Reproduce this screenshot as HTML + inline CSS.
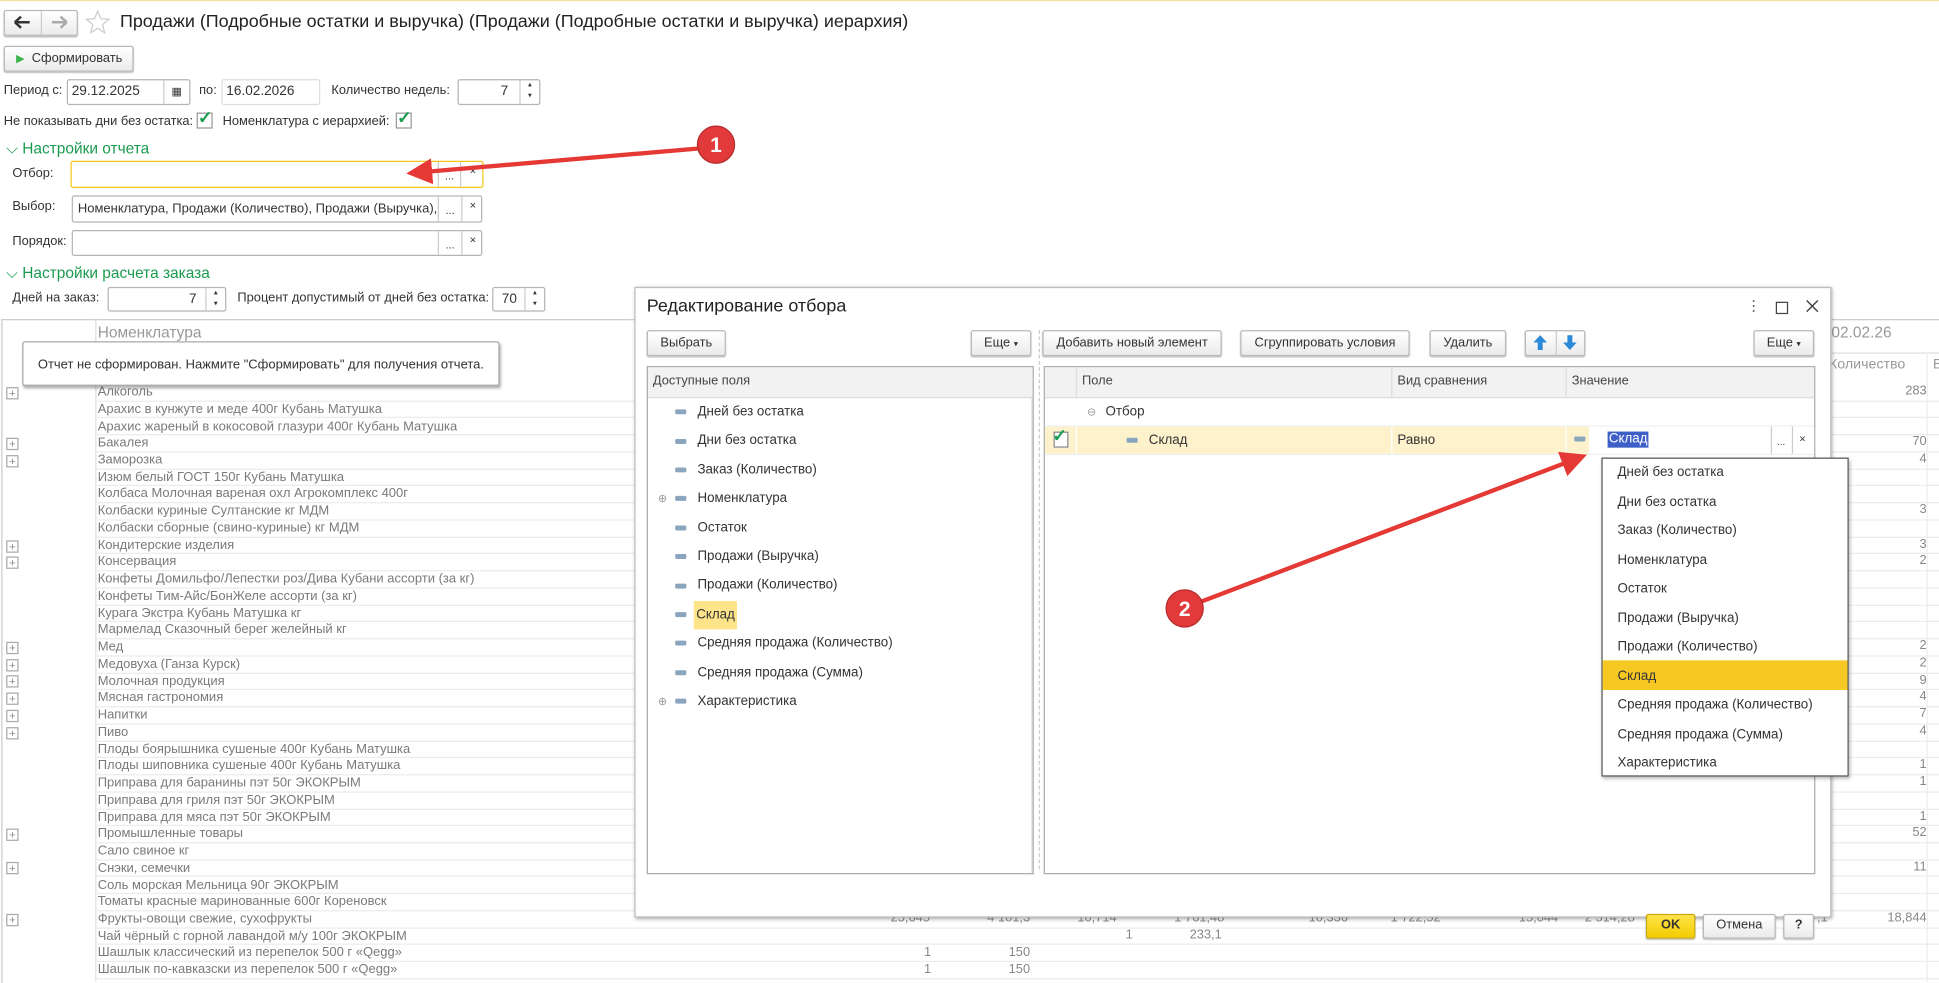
<!DOCTYPE html>
<html><head><meta charset="utf-8">
<style>
html,body{margin:0;padding:0;width:1939px;height:982px;overflow:hidden;background:#fff}
#w{position:absolute;left:0;top:0;width:1568px;height:794px;transform:scale(1.23661);transform-origin:0 0;font-family:"Liberation Sans",sans-serif;font-size:10.4px;color:#333}
.a{position:absolute;white-space:nowrap}
.btn{position:absolute;border:1px solid #b9b9b9;border-radius:2px;background:linear-gradient(#fff,#ebebeb);box-shadow:0 1px 1px rgba(0,0,0,.25);box-sizing:border-box;text-align:center;color:#333;white-space:nowrap}
.inp{position:absolute;border:1px solid #b5b5b5;border-radius:2px;background:#fff;box-sizing:border-box;overflow:hidden;white-space:nowrap}
.g{color:#1a9b50;font-size:12.5px}
.row{position:absolute;left:77px;width:1491px;height:13.74px;border-bottom:1px solid #ececec;color:#7a7a7a;font-size:10.5px;line-height:13px;padding-left:2px;box-sizing:border-box;white-space:nowrap}
.pl{position:absolute;left:5px;width:8px;height:8px;border:1px solid #aaa;font-size:9px;line-height:8px;text-align:center;color:#888}
.num{position:absolute;color:#888;text-align:right;width:60px}
.mi{display:inline-block;width:9px;height:4px;background:#8aa6bf;border-radius:1px;vertical-align:middle}
.ti{position:absolute;left:22px;height:20px;line-height:20px;font-size:10.8px}
.dd{position:absolute;left:12px;height:23.5px;line-height:23.5px;font-size:10.8px}
</style></head><body><div id="w">
<div style="position:absolute;left:0;top:0;width:1568px;height:1px;background:#f2e4a0"></div>
<div class="btn" style="left:3px;top:8px;width:60px;height:21px"></div>
<div style="position:absolute;left:33px;top:9px;width:1px;height:19px;background:#ccc"></div>
<svg class="a" style="left:10px;top:12px" width="16" height="12"><path d="M2 6H14M2 6L7 1.5M2 6L7 10.5" stroke="#333" stroke-width="2" fill="none"/></svg>
<svg class="a" style="left:40px;top:12px" width="16" height="12"><path d="M2 6H14M14 6L9 1.5M14 6L9 10.5" stroke="#aaa" stroke-width="2" fill="none"/></svg>
<svg class="a" style="left:69px;top:8px" width="20" height="20"><path d="M10 1L12.6 7.2 19 7.6 14 11.8 15.6 18.5 10 14.8 4.4 18.5 6 11.8 1 7.6 7.4 7.2Z" fill="none" stroke="#ccc"/></svg>
<div class="a" style="left:97px;top:10px;font-size:14.5px;color:#222">Продажи (Подробные остатки и выручка) (Продажи (Подробные остатки и выручка) иерархия)</div>
<div class="btn" style="left:3px;top:37px;width:105px;height:21px;line-height:19px;text-align:left;padding-left:9px"><span style="color:#3bb24a;font-size:9px">▶</span>&nbsp; Сформировать</div>
<div class="a" style="left:3px;top:68px">Период с:</div>
<div class="inp" style="left:54px;top:64px;width:100px;height:21px;padding:3px 3px;font-size:11px">29.12.2025<div style="position:absolute;right:0;top:0;width:20px;height:19px;border-left:1px solid #ccc;text-align:center;font-size:9px;line-height:19px">▦</div></div>
<div class="a" style="left:161px;top:68px">по:</div>
<div class="inp" style="left:179px;top:64px;width:80px;height:21px;padding:3px 3px;font-size:11px;border-color:#ddd">16.02.2026</div>
<div class="a" style="left:268px;top:68px">Количество недель:</div>
<div class="inp" style="left:370px;top:64px;width:67px;height:21px;padding:3px 25px 0 0;text-align:right;font-size:11px">7<div style="position:absolute;right:0;top:0;width:15px;height:19px;border-left:1px solid #ccc;font-size:6px;text-align:center;line-height:9px">▴<br>▾</div></div>
<div class="a" style="left:3px;top:93px">Не показывать дни без остатка:</div>
<div style="position:absolute;left:159px;top:91px;width:11px;height:11px;border:1px solid #999"></div><div class="a" style="left:160px;top:87px;color:#1a9b50;font-size:14px;font-weight:bold">✓</div>
<div class="a" style="left:180px;top:93px">Номенклатура с иерархией:</div>
<div style="position:absolute;left:320px;top:91px;width:11px;height:11px;border:1px solid #999"></div><div class="a" style="left:321px;top:87px;color:#1a9b50;font-size:14px;font-weight:bold">✓</div>
<div class="a g" style="left:5px;top:113px">⌵ Настройки отчета</div>
<div class="a" style="left:10px;top:135px">Отбор:</div>
<div class="inp" style="left:57px;top:130px;width:334px;height:22px;border:1px solid #f5c518"><div style="position:absolute;right:17px;top:0;width:17px;height:20px;border-left:1px solid #ccc;border-right:1px solid #ccc;text-align:center;font-size:9px;line-height:22px">...</div><div style="position:absolute;right:5px;top:2px;font-size:9px">×</div></div>
<div class="a" style="left:10px;top:162px">Выбор:</div>
<div class="inp" style="left:58px;top:158px;width:332px;height:22px;padding:4px 4px;font-size:10.5px">Номенклатура, Продажи (Количество), Продажи (Выручка),<div style="position:absolute;right:0;top:0;width:35px;height:20px;background:#fff"></div><div style="position:absolute;right:15px;top:0;width:18px;height:20px;border-left:1px solid #ccc;border-right:1px solid #ccc;text-align:center;font-size:9px;line-height:22px">...</div><div style="position:absolute;right:4px;top:2px;font-size:9px">×</div></div>
<div class="a" style="left:10px;top:190px">Порядок:</div>
<div class="inp" style="left:58px;top:186px;width:332px;height:21px"><div style="position:absolute;right:15px;top:0;width:18px;height:19px;border-left:1px solid #ccc;border-right:1px solid #ccc;text-align:center;font-size:9px;line-height:22px">...</div><div style="position:absolute;right:4px;top:2px;font-size:9px">×</div></div>
<div class="a g" style="left:5px;top:214px">⌵ Настройки расчета заказа</div>
<div class="a" style="left:10px;top:236px">Дней на заказ:</div>
<div class="inp" style="left:87px;top:232px;width:96px;height:20px;padding:3px 23px 0 0;text-align:right;font-size:11px">7<div style="position:absolute;right:0;top:0;width:15px;height:18px;border-left:1px solid #ccc;font-size:6px;text-align:center;line-height:9px">▴<br>▾</div></div>
<div class="a" style="left:192px;top:236px">Процент допустимый от дней без остатка:</div>
<div class="inp" style="left:398px;top:232px;width:43px;height:20px;padding:3px 22px 0 0;text-align:right;font-size:11px">70<div style="position:absolute;right:0;top:0;width:15px;height:18px;border-left:1px solid #ccc;font-size:6px;text-align:center;line-height:9px">▴<br>▾</div></div>
<div style="position:absolute;left:1px;top:258px;width:1567px;height:536px;border-left:1px solid #ccc;border-top:1px solid #ccc"></div>
<div style="position:absolute;left:77px;top:258px;width:1px;height:536px;background:#ddd"></div>
<div class="a" style="left:79px;top:262px;font-size:12.5px;color:#999">Номенклатура</div>
<div class="a" style="left:1481px;top:262px;font-size:12.5px;color:#999">02.02.26</div>
<div style="position:absolute;left:1476px;top:285px;width:92px;height:1px;background:#ddd"></div>
<div class="a" style="left:1479px;top:289px;font-size:11.5px;color:#999">Количество</div>
<div class="a" style="left:1563px;top:289px;font-size:11.5px;color:#999">В</div>
<div style="position:absolute;left:1558px;top:285px;width:1px;height:509px;background:#eee"></div>
<div class="row" style="top:311px">Алкоголь</div>
<div class="row" style="top:324.7px">Арахис в кунжуте и меде 400г Кубань Матушка</div>
<div class="row" style="top:338.5px">Арахис жареный в кокосовой глазури 400г Кубань Матушка</div>
<div class="row" style="top:352.2px">Бакалея</div>
<div class="row" style="top:366px">Заморозка</div>
<div class="row" style="top:379.7px">Изюм белый ГОСТ 150г Кубань Матушка</div>
<div class="row" style="top:393.4px">Колбаса Молочная вареная охл Агрокомплекс 400г</div>
<div class="row" style="top:407.2px">Колбаски куриные Султанские кг МДМ</div>
<div class="row" style="top:420.9px">Колбаски сборные (свино-куриные) кг МДМ</div>
<div class="row" style="top:434.7px">Кондитерские изделия</div>
<div class="row" style="top:448.4px">Консервация</div>
<div class="row" style="top:462.1px">Конфеты Домильфо/Лепестки роз/Дива Кубани ассорти (за кг)</div>
<div class="row" style="top:475.9px">Конфеты Тим-Айс/БонЖеле ассорти (за кг)</div>
<div class="row" style="top:489.6px">Курага Экстра Кубань Матушка кг</div>
<div class="row" style="top:503.4px">Мармелад Сказочный берег желейный кг</div>
<div class="row" style="top:517.1px">Мед</div>
<div class="row" style="top:530.8px">Медовуха (Ганза Курск)</div>
<div class="row" style="top:544.6px">Молочная продукция</div>
<div class="row" style="top:558.3px">Мясная гастрономия</div>
<div class="row" style="top:572.1px">Напитки</div>
<div class="row" style="top:585.8px">Пиво</div>
<div class="row" style="top:599.5px">Плоды боярышника сушеные 400г Кубань Матушка</div>
<div class="row" style="top:613.3px">Плоды шиповника сушеные 400г Кубань Матушка</div>
<div class="row" style="top:627px">Приправа для баранины пэт 50г ЭКОКРЫМ</div>
<div class="row" style="top:640.8px">Приправа для гриля пэт 50г ЭКОКРЫМ</div>
<div class="row" style="top:654.5px">Приправа для мяса пэт 50г ЭКОКРЫМ</div>
<div class="row" style="top:668.2px">Промышленные товары</div>
<div class="row" style="top:682px">Сало свиное кг</div>
<div class="row" style="top:695.7px">Снэки, семечки</div>
<div class="row" style="top:709.5px">Соль морская Мельница 90г ЭКОКРЫМ</div>
<div class="row" style="top:723.2px">Томаты красные маринованные 600г Кореновск</div>
<div class="row" style="top:736.9px">Фрукты-овощи свежие, сухофрукты</div>
<div class="row" style="top:750.7px">Чай чёрный с горной лавандой м/у 100г ЭКОКРЫМ</div>
<div class="row" style="top:764.4px">Шашлык классический из перепелок 500 г «Qegg»</div>
<div class="row" style="top:778.2px">Шашлык по-кавказски из перепелок 500 г «Qegg»</div>
<div class="pl" style="top:313px">+</div><div class="pl" style="top:354px">+</div><div class="pl" style="top:368px">+</div><div class="pl" style="top:437px">+</div><div class="pl" style="top:450px">+</div><div class="pl" style="top:519px">+</div><div class="pl" style="top:533px">+</div><div class="pl" style="top:546px">+</div><div class="pl" style="top:560px">+</div><div class="pl" style="top:574px">+</div><div class="pl" style="top:588px">+</div><div class="pl" style="top:670px">+</div><div class="pl" style="top:697px">+</div><div class="pl" style="top:739px">+</div>
<div class="num" style="left:1498px;top:311px">283</div>
<div class="num" style="left:1498px;top:352px">70</div>
<div class="num" style="left:1498px;top:366px">4</div>
<div class="num" style="left:1498px;top:407px">3</div>
<div class="num" style="left:1498px;top:435px">3</div><div class="num" style="left:1498px;top:448px">2</div>
<div class="num" style="left:1498px;top:517px">2</div><div class="num" style="left:1498px;top:531px">2</div><div class="num" style="left:1498px;top:545px">9</div><div class="num" style="left:1498px;top:558px">4</div><div class="num" style="left:1498px;top:572px">7</div><div class="num" style="left:1498px;top:586px">4</div>
<div class="num" style="left:1498px;top:613px">1</div><div class="num" style="left:1498px;top:627px">1</div><div class="num" style="left:1498px;top:655px">1</div><div class="num" style="left:1498px;top:668px">52</div><div class="num" style="left:1498px;top:696px">11</div>
<div class="num" style="left:1498px;top:737px">18,844</div>
<div class="num" style="left:692px;top:737px">25,645</div><div class="num" style="left:773px;top:737px">4 101,3</div><div class="num" style="left:843px;top:737px">10,714</div><div class="num" style="left:930px;top:737px">1 761,48</div><div class="num" style="left:1030px;top:737px">10,336</div><div class="num" style="left:1105px;top:737px">1 722,52</div><div class="num" style="left:1200px;top:737px">15,044</div><div class="num" style="left:1262px;top:737px">2 514,28</div><div class="num" style="left:1364px;top:737px">8,815</div><div class="num" style="left:1418px;top:737px">1 317,1</div>
<div class="num" style="left:856px;top:751px">1</div><div class="num" style="left:928px;top:751px">233,1</div>
<div class="num" style="left:693px;top:765px">1</div><div class="num" style="left:773px;top:765px">150</div>
<div class="num" style="left:693px;top:779px">1</div><div class="num" style="left:773px;top:779px">150</div>
<div style="position:absolute;left:18px;top:276px;width:386px;height:36px;background:#fff;border:1px solid #aaa;border-radius:2px;box-shadow:1px 2px 2px rgba(0,0,0,.3);box-sizing:border-box;text-align:center;line-height:36px;font-size:10.5px;color:#333">Отчет не сформирован. Нажмите "Сформировать" для получения отчета.</div>
<div style="position:absolute;left:513px;top:232px;width:968px;height:510px;background:#fff;border:1px solid #bbb;box-shadow:1px 1px 3px rgba(0,0,0,.35);box-sizing:border-box">
<div class="a" style="left:9px;top:7px;font-size:14.5px;color:#222">Редактирование отбора</div>
<div class="a" style="left:898px;top:7px;font-size:12px;color:#666">⋮</div>
<div style="position:absolute;left:922px;top:11px;width:8px;height:8px;border:1px solid #444"></div>
<svg class="a" style="left:946px;top:9px" width="11" height="11"><path d="M1 1L10 10M10 1L1 10" stroke="#444" stroke-width="1.2"/></svg>
<div class="btn" style="left:9px;top:34px;width:64px;height:21px;line-height:19px">Выбрать</div>
<div class="btn" style="left:271px;top:34px;width:49px;height:21px;line-height:19px">Еще <span style="font-size:7px">▾</span></div>
<div style="position:absolute;left:326px;top:34px;width:0;height:436px;border-left:1px dashed #ccc"></div>
<div class="btn" style="left:329px;top:34px;width:145px;height:21px;line-height:19px">Добавить новый элемент</div>
<div class="btn" style="left:489px;top:34px;width:137px;height:21px;line-height:19px">Сгруппировать условия</div>
<div class="btn" style="left:642px;top:34px;width:62px;height:21px;line-height:19px">Удалить</div>
<div class="btn" style="left:719px;top:34px;width:49px;height:21px"></div>
<div style="position:absolute;left:744px;top:35px;width:1px;height:19px;background:#ccc"></div>
<svg class="a" style="left:726px;top:38px" width="11" height="12"><path d="M5.5 0L11 6H7.5V12H3.5V6H0Z" fill="#2a8ad8"/></svg>
<svg class="a" style="left:750px;top:38px" width="11" height="12"><path d="M5.5 12L11 6H7.5V0H3.5V6H0Z" fill="#2a8ad8"/></svg>
<div class="btn" style="left:904px;top:34px;width:49px;height:21px;line-height:19px">Еще <span style="font-size:7px">▾</span></div>
<div style="position:absolute;left:9px;top:63px;width:313px;height:411px;border:1px solid #aaa;box-sizing:border-box">
<div style="height:24px;background:#f2f2f2;border-bottom:1px solid #ddd;line-height:24px;padding-left:4px;color:#444">Доступные поля</div>
<div class="ti" style="top:26px"><span class="mi"></span>&nbsp;&nbsp; Дней без остатка</div>
<div class="ti" style="top:49.4px"><span class="mi"></span>&nbsp;&nbsp; Дни без остатка</div>
<div class="ti" style="top:72.8px"><span class="mi"></span>&nbsp;&nbsp; Заказ (Количество)</div>
<div class="ti" style="top:96.2px"><span class="a" style="left:-14px;color:#999;font-size:9px">⊕</span><span class="mi"></span>&nbsp;&nbsp; Номенклатура</div>
<div class="ti" style="top:119.6px"><span class="mi"></span>&nbsp;&nbsp; Остаток</div>
<div class="ti" style="top:143px"><span class="mi"></span>&nbsp;&nbsp; Продажи (Выручка)</div>
<div class="ti" style="top:166.4px"><span class="mi"></span>&nbsp;&nbsp; Продажи (Количество)</div>
<div class="ti" style="top:189.8px"><span class="mi"></span>&nbsp;&nbsp;<span style="background:#fde38a;padding:5px 2px 6px 2px">Склад</span></div>
<div class="ti" style="top:213.2px"><span class="mi"></span>&nbsp;&nbsp; Средняя продажа (Количество)</div>
<div class="ti" style="top:236.6px"><span class="mi"></span>&nbsp;&nbsp; Средняя продажа (Сумма)</div>
<div class="ti" style="top:260px"><span class="a" style="left:-14px;color:#999;font-size:9px">⊕</span><span class="mi"></span>&nbsp;&nbsp; Характеристика</div>
<div style="position:absolute;right:0;top:25px;width:1px;height:384px;background:#ddd"></div>
</div>
<div style="position:absolute;left:330px;top:63px;width:624px;height:411px;border:1px solid #aaa;box-sizing:border-box">
<div style="position:absolute;left:0;top:0;width:622px;height:24px;background:#f2f2f2;border-bottom:1px solid #ddd"></div>
<div style="position:absolute;left:25px;top:0;width:1px;height:24px;background:#ddd"></div>
<div style="position:absolute;left:280px;top:0;width:1px;height:24px;background:#ddd"></div>
<div style="position:absolute;left:421px;top:0;width:1px;height:24px;background:#ddd"></div>
<div class="a" style="left:30px;top:6px;color:#444">Поле</div>
<div class="a" style="left:285px;top:6px;color:#444">Вид сравнения</div>
<div class="a" style="left:426px;top:6px;color:#444">Значение</div>
<div class="a" style="left:34px;top:31px;color:#999;font-size:9px">⊖</div>
<div class="a" style="left:49px;top:30px;font-size:10.8px">Отбор</div>
<div style="position:absolute;left:0;top:47px;width:622px;height:1px;background:#eee"></div>
<div style="position:absolute;left:0;top:48px;width:440px;height:22px;background:#fdf2cc"></div>
<div style="position:absolute;left:7px;top:52px;width:10px;height:11px;border:1px solid #888;background:#fff"></div>
<div class="a" style="left:6px;top:47px;color:#1a9b50;font-size:14px;font-weight:bold">✓</div>
<div style="position:absolute;left:25px;top:48px;width:1px;height:22px;background:#fff"></div>
<div style="position:absolute;left:280px;top:48px;width:1px;height:22px;background:#fff"></div>
<div style="position:absolute;left:421px;top:48px;width:1px;height:22px;background:#fff"></div>
<div class="a" style="left:66px;top:53px;font-size:10.8px"><span class="mi"></span>&nbsp;&nbsp; Склад</div>
<div class="a" style="left:285px;top:53px;font-size:10.8px">Равно</div>
<div class="a" style="left:428px;top:53px"><span class="mi"></span></div>
<div style="position:absolute;left:440px;top:48px;width:182px;height:22px;background:#fff"></div>
<div class="a" style="left:455px;top:52px;background:#3d5fc7;color:#fff;padding:0 1px;line-height:13px;font-size:10.8px">Склад</div>
<div style="position:absolute;left:587px;top:48px;width:1px;height:22px;background:#ccc"></div>
<div style="position:absolute;left:604px;top:48px;width:1px;height:22px;background:#ccc"></div>
<div class="a" style="left:592px;top:56px;font-size:8px">...</div>
<div class="a" style="left:610px;top:53px;font-size:9px">×</div>
<div style="position:absolute;left:0;top:70px;width:622px;height:1px;background:#eee"></div>
</div>
<div class="btn" style="left:817px;top:506px;width:40px;height:20px;line-height:18px;background:linear-gradient(#ffe44a,#f3cc00);border-color:#c9a800;font-weight:bold">OK</div>
<div class="btn" style="left:863px;top:506px;width:59px;height:20px;line-height:18px">Отмена</div>
<div class="btn" style="left:928px;top:506px;width:25px;height:20px;line-height:18px;font-weight:bold">?</div>
</div>
<div style="position:absolute;left:1295px;top:370px;width:200px;height:258px;background:#fff;border:1px solid #555;box-shadow:1px 2px 3px rgba(0,0,0,.3);box-sizing:border-box">
<div style="position:absolute;left:0;top:163px;width:198px;height:23.5px;background:#f6c823"></div>
<div class="dd" style="top:0">Дней без остатка</div>
<div class="dd" style="top:23.5px">Дни без остатка</div>
<div class="dd" style="top:47px">Заказ (Количество)</div>
<div class="dd" style="top:70.5px">Номенклатура</div>
<div class="dd" style="top:94px">Остаток</div>
<div class="dd" style="top:117.5px">Продажи (Выручка)</div>
<div class="dd" style="top:141px">Продажи (Количество)</div>
<div class="dd" style="top:164.5px">Склад</div>
<div class="dd" style="top:188px">Средняя продажа (Количество)</div>
<div class="dd" style="top:211.5px">Средняя продажа (Сумма)</div>
<div class="dd" style="top:235px">Характеристика</div>
</div>
<svg style="position:absolute;left:0;top:0" width="1568" height="794">
<defs><marker id="ah" markerWidth="6" markerHeight="6" refX="5" refY="3" orient="auto"><path d="M0,0 L6,3 L0,6 Z" fill="#e53935"/></marker></defs>
<line x1="566" y1="120" x2="332" y2="140" stroke="#e53935" stroke-width="3.5" marker-end="url(#ah)"/>
<line x1="970" y1="487" x2="1280" y2="369" stroke="#e53935" stroke-width="3.5" marker-end="url(#ah)"/>
<circle cx="579" cy="117" r="15" fill="#e23a3a" stroke="#b52a2a"/>
<text x="579" y="123" font-family="Liberation Sans" font-size="17" font-weight="bold" fill="#fff" text-anchor="middle">1</text>
<circle cx="958" cy="492" r="15" fill="#e23a3a" stroke="#b52a2a"/>
<text x="958" y="498" font-family="Liberation Sans" font-size="17" font-weight="bold" fill="#fff" text-anchor="middle">2</text>
</svg>
</div></body></html>
